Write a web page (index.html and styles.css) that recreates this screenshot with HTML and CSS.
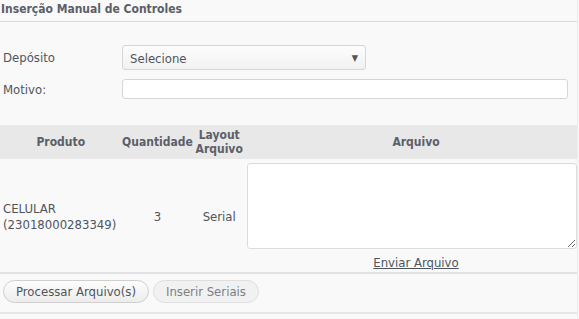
FILE: index.html
```html
<!DOCTYPE html>
<html lang="pt-BR">
<head>
    <meta charset="UTF-8">
    <title>Inserção Manual de Controles</title>
    <link rel="stylesheet" href="styles.css">
</head>
<body>
    <div class="panel">
        <h3 class="panel-title">Inserção Manual de Controles</h3>

        <div class="form-row">
            <label for="deposito">Depósito</label>
            <div class="select-box" id="deposito">
                <span>Selecione</span>
                <span class="caret">&#9660;</span>
            </div>
        </div>
        <div class="form-row">
            <label for="motivo">Motivo:</label>
            <input type="text" id="motivo" class="text-input">
        </div>

        <table class="grid">
            <thead>
                <tr>
                    <th class="col-produto">Produto</th>
                    <th class="col-qtd">Quantidade</th>
                    <th class="col-layout">Layout Arquivo</th>
                    <th class="col-arquivo">Arquivo</th>
                </tr>
            </thead>
            <tbody>
                <tr>
                    <td class="cell-produto">CELULAR (23018000283349)</td>
                    <td class="cell-center">3</td>
                    <td class="cell-center">Serial</td>
                    <td class="cell-arquivo">
                        <textarea class="serials"></textarea>
                        <a href="#" class="send-link">Enviar Arquivo</a>
                    </td>
                </tr>
            </tbody>
        </table>

        <div class="actions">
            <button class="pill-btn">Processar Arquivo(s)</button>
            <button class="pill-btn muted">Inserir Seriais</button>
        </div>
    </div>
</body>
</html>
```

FILE: styles.css
```css
body {
    margin: 0;
    background-color: #f9f9f9;
    font-family: "DejaVu Sans Condensed", "Noto Sans", sans-serif;
    font-size: 13px;
    color: #4f555d;
}
.panel {
    width: 578px;
    border-right: 1px solid #ececec;
    min-height: 319px;
    box-sizing: border-box;
}
.panel-title {
    margin: 0;
    padding: 2px 0 0 1px;
    height: 19px;
    font-size: 12px;
    font-weight: bold;
    color: #5b6068;
    border-bottom: 1px solid #dcdcdc;
    box-sizing: content-box;
}
.form-row {
    display: flex;
    align-items: center;
    padding-left: 3px;
}
.form-row:nth-of-type(1) {
    margin-top: 23px;
    height: 25px;
}
.form-row:nth-of-type(2) {
    margin-top: 9px;
    height: 20px;
}
.form-row label {
    width: 119px;
    font-size: 13px;
}
.select-box {
    width: 244px;
    height: 25px;
    box-sizing: border-box;
    border: 1px solid #d6d6d6;
    border-radius: 3px;
    background: linear-gradient(#fdfdfd, #f1f1f1);
    display: flex;
    align-items: center;
    justify-content: space-between;
    padding: 1px 7px 0 7px;
}
.caret {
    font-size: 9px;
    color: #555;
}
.text-input {
    width: 446px;
    height: 20px;
    box-sizing: border-box;
    border: 1px solid #d6d6d6;
    border-radius: 3px;
    background: #fff;
    margin: 0;
}
.grid {
    margin-top: 26px;
    width: 577px;
    border-collapse: collapse;
}
.grid th {
    background-color: #e8e8e8;
    color: #5b6068;
    font-size: 12px;
    font-weight: bold;
    height: 34px;
    padding: 0;
    line-height: 14px;
    border-bottom: 2px solid #f9f9f9;
}
.grid thead tr {
    border-bottom: 2px solid #dedede;
}
.col-produto { width: 122px; }
.col-qtd { width: 72px; }
.col-layout { width: 52px; }
.col-arquivo { padding-left: 10px !important; }
.grid td {
    padding: 0;
    vertical-align: middle;
}
.grid tbody tr {
    border-bottom: 2px solid #e2e2e2;
}
.cell-produto {
    padding-left: 3px !important;
    line-height: 16px;
}
.cell-center {
    text-align: center;
}
.cell-arquivo {
    text-align: center;
    padding-top: 2px !important;
    padding-left: 10px !important;
}
.serials {
    display: block;
    width: 330px;
    height: 86px;
    box-sizing: border-box;
    margin: 0 0 0 -8px;
    border: 1px solid #dcdcdc;
    border-radius: 3px;
    background: #fff;
}
.send-link {
    display: block;
    margin-top: 6px;
    margin-bottom: 1px;
    color: #4d5560;
    text-decoration: underline;
    line-height: 16px;
}
.actions {
    padding: 6px 0 0 3px;
    display: flex;
    gap: 4px;
    height: 40px;
    box-sizing: border-box;
    border-bottom: 2px solid #e6e6e6;
}
.pill-btn {
    height: 23px;
    padding: 0 12px;
    border: 1px solid #cfcfcf;
    border-radius: 12px;
    background: linear-gradient(#fdfdfd, #ececec);
    font-family: inherit;
    font-size: 13px;
    color: #4f555d;
}
.pill-btn.muted {
    color: #7b8088;
    border-color: #dedede;
    background: #f1f1f1;
}
```
